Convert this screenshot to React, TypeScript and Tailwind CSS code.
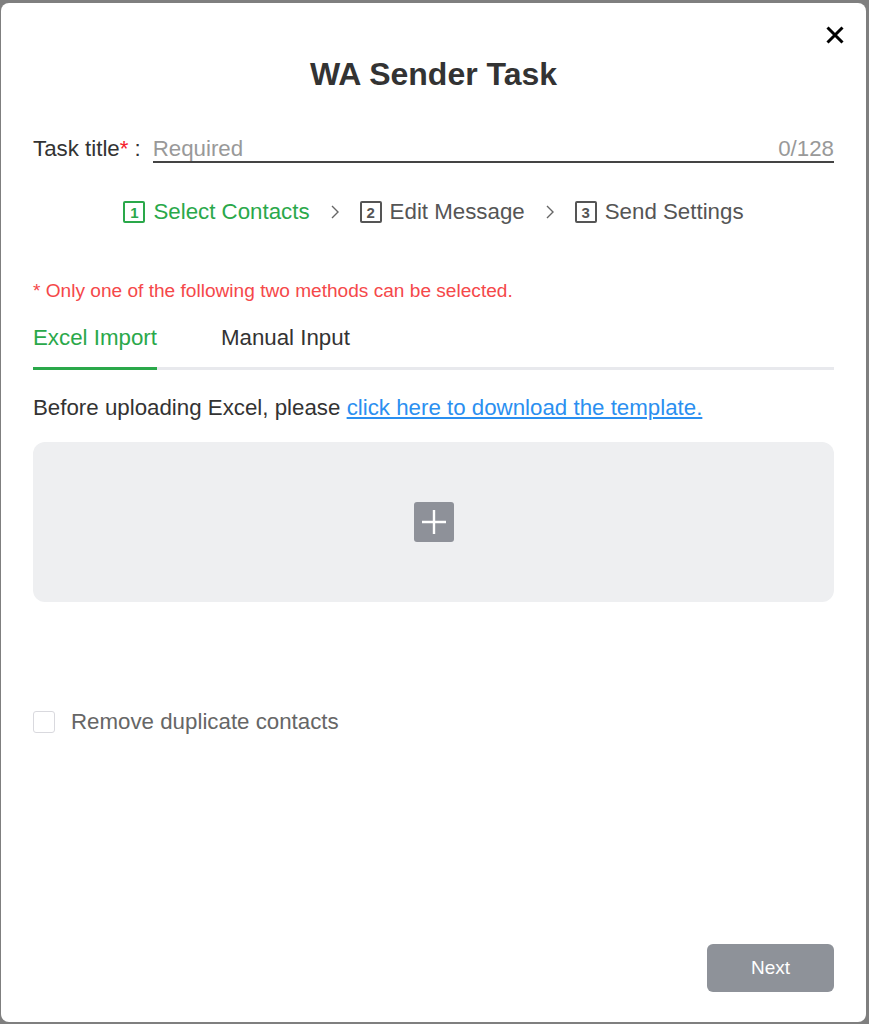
import { useState } from "react";

const steps = [
  { n: 1, label: "Select Contacts", active: true },
  { n: 2, label: "Edit Message", active: false },
  { n: 3, label: "Send Settings", active: false },
];

function Chevron() {
  return (
    <svg className="w-[12px] h-[16px] mx-[19px]" viewBox="0 0 12 16" fill="none">
      <path d="M3 2l6 6-6 6" stroke="#666" strokeWidth="1.4" />
    </svg>
  );
}

export default function App() {
  const [title, setTitle] = useState("");
  const [tab, setTab] = useState(0);
  const [dedupe, setDedupe] = useState(false);

  return (
    <div className="h-[1024px] bg-[#7f7f7f] pt-[3px] pr-[3px] pb-[2px] pl-[1px] font-['Liberation_Sans',Arial,sans-serif]">
      <div className="relative h-full bg-white rounded-[8px] flex flex-col px-[32px] pb-[30px]">
        {/* Close */}
        <button className="absolute top-[21px] right-[20px] w-[22px] h-[22px] flex items-center justify-center">
          <svg viewBox="0 0 20 20" className="w-[20px] h-[20px]">
            <path d="M2.5 2.5l15 15M17.5 2.5l-15 15" stroke="#000" strokeWidth="3" />
          </svg>
        </button>

        {/* Title */}
        <h1 className="mt-[51px] text-center text-[32px] leading-[40px] font-bold text-[#333]">
          WA Sender Task
        </h1>

        {/* Task title */}
        <div className="mt-[39px] flex items-end h-[30px]">
          <label className="text-[22.3px] leading-[28px] text-[#333] mr-[12px] whitespace-nowrap">
            Task title<span className="text-[#f5222d]">*</span>
            <span className="ml-[6px]">:</span>
          </label>
          <div className="flex-1 flex items-end border-b-2 border-[#444] h-full">
            <input
              value={title}
              onChange={(e) => setTitle(e.target.value.slice(0, 128))}
              placeholder="Required"
              className="flex-1 outline-none text-[22.3px] leading-[24px] text-[#333] placeholder:text-[#999] bg-transparent"
            />
            <span className="text-[22.3px] leading-[24px] text-[#999]">{title.length}/128</span>
          </div>
        </div>

        {/* Steps */}
        <div className="mt-[34px] h-[30px] flex items-center justify-center">
          {steps.map((s, i) => (
            <div key={s.n} className="flex items-center">
              <div className={`flex items-center ${s.active ? "text-[#2aa84a]" : "text-[#555]"}`}>
                <span
                  className={`w-[22px] h-[22px] border-2 rounded-[2px] flex items-center justify-center text-[15px] font-bold leading-none ${
                    s.active ? "border-[#2aa84a]" : "border-[#555]"
                  }`}
                >
                  {s.n}
                </span>
                <span className="ml-[8px] text-[22.3px] leading-[28px]">{s.label}</span>
              </div>
              {i < steps.length - 1 && <Chevron />}
            </div>
          ))}
        </div>

        {/* Note */}
        <p className="mt-[52px] text-[19.1px] leading-[24px] text-[#f5484a]">
          * Only one of the following two methods can be selected.
        </p>

        {/* Tabs */}
        <div className="mt-[20px] border-b-[3px] border-[#e8e9ed] flex gap-[64px]">
          {["Excel Import", "Manual Input"].map((t, i) => (
            <button
              key={t}
              onClick={() => setTab(i)}
              className={`relative pb-[14px] text-[22.3px] leading-[30px] ${
                tab === i ? "text-[#2aa84a]" : "text-[#333]"
              }`}
            >
              {t}
              {tab === i && (
                <span className="absolute left-0 right-0 -bottom-[3px] h-[3px] bg-[#2aa84a]" />
              )}
            </button>
          ))}
        </div>

        <p className="mt-[24px] text-[22.3px] leading-[28px] text-[#333]">
          Before uploading Excel, please{" "}
          <a href="#" className="text-[#2b8ff0] underline">
            click here to download the template.
          </a>
        </p>

        {/* Upload area */}
        <div className="mt-[20px] h-[160px] rounded-[12px] bg-[#eeeff1] flex items-center justify-center">
          <div className="w-[40px] h-[40px] rounded-[3px] bg-[#8e9199] flex items-center justify-center">
            <svg viewBox="0 0 40 40" className="w-[40px] h-[40px]">
              <path d="M20 8v24M8 20h24" stroke="#fff" strokeWidth="2.4" />
            </svg>
          </div>
        </div>

        {/* Checkbox */}
        <label className="mt-[108px] flex items-center h-[24px] cursor-pointer">
          <input
            type="checkbox"
            checked={dedupe}
            onChange={(e) => setDedupe(e.target.checked)}
            className="appearance-none w-[22px] h-[22px] border border-[#d9d9de] rounded-[3px] bg-white"
          />
          <span className="ml-[16px] text-[22.3px] leading-[28px] text-[#666]">Remove duplicate contacts</span>
        </label>

        <div className="mt-auto flex justify-end">
          <button className="w-[127px] h-[48px] rounded-[6px] bg-[#8e9299] text-white text-[19px]">Next</button>
        </div>
      </div>
    </div>
  );
}
